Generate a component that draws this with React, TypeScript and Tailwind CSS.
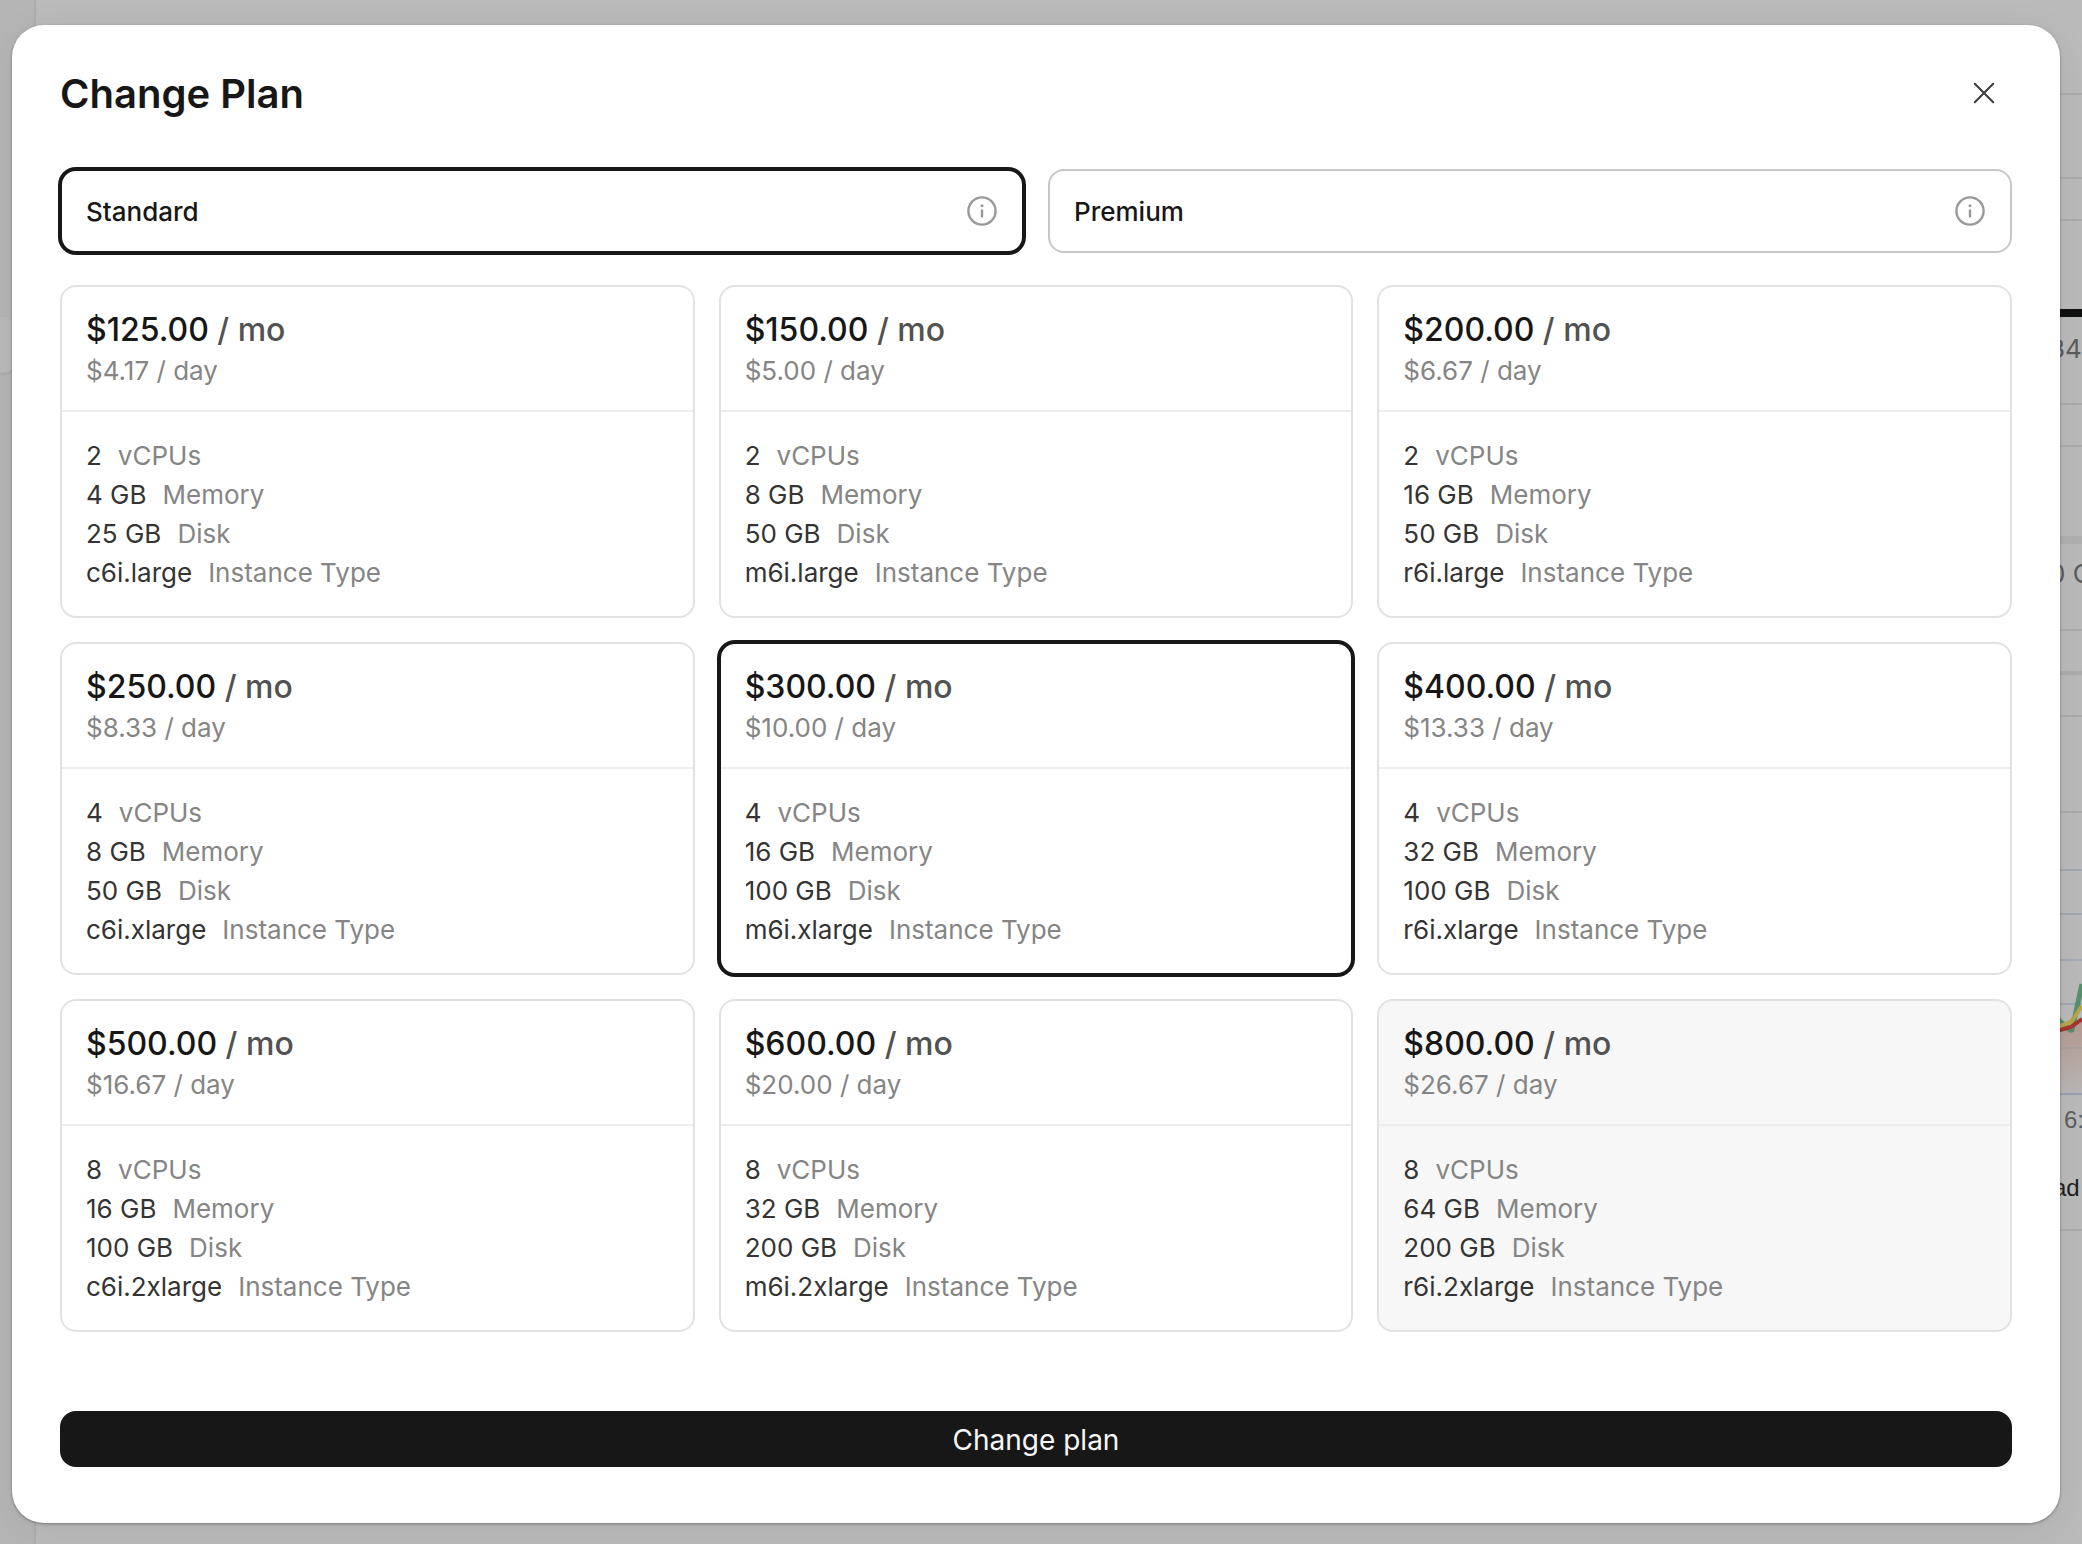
import { useState } from "react";

type Plan = {
  price: string;
  daily: string;
  cpus: string;
  memory: string;
  disk: string;
  instance: string;
  hovered?: boolean;
};

const tiers = ["Standard", "Premium"];

const plans: Plan[] = [
  { price: "$125.00", daily: "$4.17", cpus: "2", memory: "4 GB", disk: "25 GB", instance: "c6i.large" },
  { price: "$150.00", daily: "$5.00", cpus: "2", memory: "8 GB", disk: "50 GB", instance: "m6i.large" },
  { price: "$200.00", daily: "$6.67", cpus: "2", memory: "16 GB", disk: "50 GB", instance: "r6i.large" },
  { price: "$250.00", daily: "$8.33", cpus: "4", memory: "8 GB", disk: "50 GB", instance: "c6i.xlarge" },
  { price: "$300.00", daily: "$10.00", cpus: "4", memory: "16 GB", disk: "100 GB", instance: "m6i.xlarge" },
  { price: "$400.00", daily: "$13.33", cpus: "4", memory: "32 GB", disk: "100 GB", instance: "r6i.xlarge" },
  { price: "$500.00", daily: "$16.67", cpus: "8", memory: "16 GB", disk: "100 GB", instance: "c6i.2xlarge" },
  { price: "$600.00", daily: "$20.00", cpus: "8", memory: "32 GB", disk: "200 GB", instance: "m6i.2xlarge" },
  { price: "$800.00", daily: "$26.67", cpus: "8", memory: "64 GB", disk: "200 GB", instance: "r6i.2xlarge", hovered: true },
];

function InfoIcon() {
  return (
    <svg viewBox="0 0 32 32" className="size-8" fill="none" stroke="currentColor" aria-hidden="true">
      <circle cx="16" cy="16" r="13.6" strokeWidth="2.4" />
      <path d="M16 14.5v8" strokeWidth="2.4" />
      <circle cx="16" cy="10.7" r="1.5" fill="currentColor" stroke="none" />
    </svg>
  );
}

function Spec({ value, label }: { value: string; label: string }) {
  return (
    <li className="flex gap-4">
      <span className="text-[#343434]">{value}</span>
      <span className="text-[#858585]">{label}</span>
    </li>
  );
}

function TierOption({ name, checked, onSelect }: { name: string; checked: boolean; onSelect: () => void }) {
  return (
    <div
      className={`relative flex h-[84px] items-center rounded-2xl border-2 bg-white pr-6 ${
        checked ? "border-[#171717] ring-2 ring-[#171717]" : "border-[#c7c7c7]"
      }`}
    >
      <label className="flex h-full flex-1 cursor-pointer items-center pl-6 text-[26px] leading-[39px] font-medium text-[#171717]">
        <input type="radio" name="tier" value={name} checked={checked} onChange={onSelect} className="sr-only" />
        {name}
      </label>
      <button type="button" aria-label={`About ${name}`} className="text-[#999999]">
        <InfoIcon />
      </button>
    </div>
  );
}

function PlanCard({ plan, checked, onSelect }: { plan: Plan; checked: boolean; onSelect: () => void }) {
  return (
    <label
      className={`relative block cursor-pointer rounded-2xl border-2 ${
        checked ? "border-[#171717] ring-2 ring-[#171717]" : "border-[#e2e2e2]"
      } ${plan.hovered ? "bg-[#f7f7f7]" : "bg-white"}`}
    >
      <input type="radio" name="plan" value={plan.instance} checked={checked} onChange={onSelect} className="sr-only" />
      <div className="border-b-2 border-[#ededed] px-6 pt-[22px] pb-5">
        <p className="text-[32px] leading-[42px] font-medium text-[#171717]">
          {plan.price} <span className="text-[#525252]">/ mo</span>
        </p>
        <p className="text-[26px] leading-[39px] text-[#858585]">{plan.daily} / day</p>
      </div>
      <ul className="p-6 text-[26px] leading-[39px]">
        <Spec value={plan.cpus} label="vCPUs" />
        <Spec value={plan.memory} label="Memory" />
        <Spec value={plan.disk} label="Disk" />
        <Spec value={plan.instance} label="Instance Type" />
      </ul>
    </label>
  );
}

function UsageChart() {
  return (
    <svg viewBox="0 0 40 282" className="block h-[282px] w-10" fill="none" aria-hidden="true">
      <defs>
        <linearGradient id="area" x1="0" y1="0" x2="0" y2="1">
          <stop offset="0" stopColor="#b5998f" />
          <stop offset="1" stopColor="#b9b7b6" />
        </linearGradient>
      </defs>
      <path d="M0 57h40M0 101h40M0 147h40M0 191h40" stroke="#a2a7b2" strokeWidth="2" />
      <path d="M0 219h18l11-4 11-8v74H0z" fill="url(#area)" />
      <path d="M0 235h40" stroke="#aaa19e" strokeWidth="2" />
      <path d="M10 200l8 8 10 9h2l10-46" stroke="#55906c" strokeWidth="5" strokeLinejoin="round" />
      <path d="M0 216l18-3 11-4 11-16" stroke="#b9a548" strokeWidth="4" strokeLinejoin="round" />
      <path d="M0 220l18-3 11-3 11-8" stroke="#a83431" strokeWidth="4" strokeLinejoin="round" />
      <path d="M0 281h40" stroke="#989fb0" strokeWidth="2" />
    </svg>
  );
}

function Backdrop() {
  return (
    <div className="absolute inset-0 flex overflow-hidden bg-[#bababa]" aria-hidden="true">
      <div className="w-9 shrink-0 border-r-2 border-[#adadad] bg-[#b5b5b5] pt-[317px]">
        <div className="h-14 w-4 rounded-r-xl bg-[#b9b9b9] shadow-sm" />
      </div>
      <div className="flex-1" />
      <div className="w-10 shrink-0 overflow-hidden whitespace-nowrap">
        <div className="h-[95px] border-b-2 border-[#acacac]" />
        <div className="h-[84px] border-b-2 border-[#acacac]" />
        <div className="h-[42px] border-b-2 border-[#acacac]" />
        <div className="h-24 border-b-8 border-[#101211]" />
        <div className="h-[88px] border-b-2 border-[#acacac] pt-3 pl-[7px] text-[26px] leading-[39px] text-[#5c5c5c]">34</div>
        <div className="h-[42px] border-b-2 border-[#acacac]" />
        <div className="h-[97px] border-b-8 border-[#b0b0b0]" />
        <div className="h-[87px] border-b-2 border-[#acacac] pt-[10px] pl-[7px] text-[26px] leading-[39px] text-[#5c5c5c]">0 G</div>
        <div className="h-11 border-b-4 border-[#acacac]" />
        <div className="h-[42px] border-b-2 border-[#acacac]" />
        <div className="h-24 border-b-2 border-[#acacac]" />
        <UsageChart />
        <div className="h-[47px] pt-[7px] pl-[22px] font-['Liberation_Sans'] text-[24px] leading-[36px] text-[#5e5e62]">6:</div>
        <div className="h-[89px] border-b-2 border-[#acacac] pt-[26px] pl-[11px] font-['Liberation_Sans'] text-[24px] leading-[39px] text-[#202020]">
          ad
        </div>
      </div>
    </div>
  );
}

export default function App() {
  const [tier, setTier] = useState("Standard");
  const [selected, setSelected] = useState("m6i.xlarge");

  return (
    <div className="relative min-h-screen font-['Inter',sans-serif]">
      <Backdrop />
      <div className="relative pt-[25px] pr-[22px] pb-[21px] pl-3">
        <form
          role="dialog"
          aria-labelledby="change-plan-title"
          onSubmit={(event) => event.preventDefault()}
          className="rounded-[32px] bg-white px-12 pt-10 pb-14 shadow-[0_1px_3px_rgba(0,0,0,0.35),0_8px_40px_rgba(0,0,0,0.06)]"
        >
          <header className="mb-[46px] flex items-center justify-between">
            <h1 id="change-plan-title" className="text-[40px] leading-[58px] font-semibold text-[#171717]">
              Change Plan
            </h1>
            <button type="button" aria-label="Close" className="grid size-14 place-items-center self-start text-[#3c3c3c]">
              <svg viewBox="0 0 24 24" className="size-6" fill="none" stroke="currentColor" strokeWidth="2" strokeLinecap="round">
                <path d="M2.8 2.8l18.4 18.4M21.2 2.8L2.8 21.2" />
              </svg>
            </button>
          </header>

          <div role="radiogroup" aria-label="Plan tier" className="mb-8 grid grid-cols-2 gap-6">
            {tiers.map((name) => (
              <TierOption key={name} name={name} checked={tier === name} onSelect={() => setTier(name)} />
            ))}
          </div>

          <div role="radiogroup" aria-label="Plan" className="grid grid-cols-3 gap-6">
            {plans.map((plan) => (
              <PlanCard
                key={plan.instance}
                plan={plan}
                checked={selected === plan.instance}
                onSelect={() => setSelected(plan.instance)}
              />
            ))}
          </div>

          <button type="submit" className="mt-[79px] block h-14 w-full rounded-2xl bg-[#171717] pt-0.5 text-[28px] leading-[42px] text-[#f7f7f7]">
            Change plan
          </button>
        </form>
      </div>
    </div>
  );
}
